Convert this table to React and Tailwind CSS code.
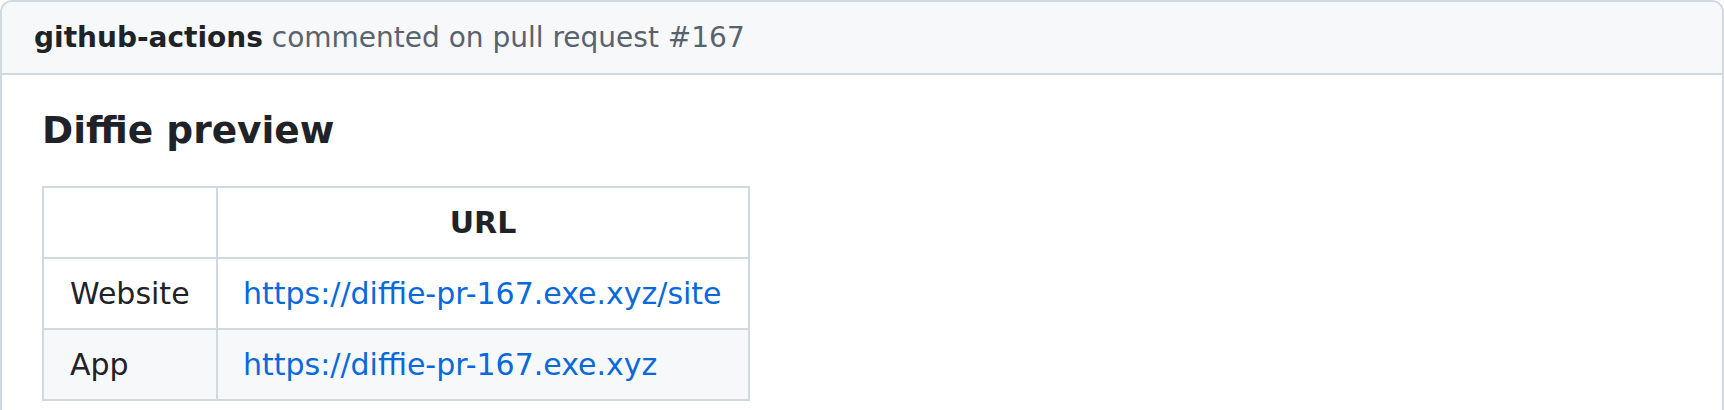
const rows = [
  { label: 'Website', url: 'https://diffie-pr-167.exe.xyz/site' },
  { label: 'App',     url: 'https://diffie-pr-167.exe.xyz' },
]

export default function App() {
  return (
    <div className="w-[1724px] h-[410px] overflow-hidden bg-white" style={{ fontFamily: '"DejaVu Sans", Verdana, sans-serif' }}>
      <div className="border-2 border-[#d1d9e0] rounded-[12px] overflow-hidden min-h-[440px]">

        {/* Header */}
        <div className="bg-[#f6f8fa] border-b-2 border-[#d1d9e0] h-[73px] flex items-center pl-[32px]">
          <p className="text-[28px] leading-[42px] text-[#59636e]">
            <span className="font-bold text-[#1f2328]">github-actions</span> commented on pull request #167
          </p>
        </div>

        {/* Body */}
        <div className="px-[40px] pt-[32px] text-[#1f2328]">
          <h3 className="text-[37.5px] leading-[46px] font-bold">Diffie preview</h3>

          <table className="mt-[33px] border-collapse text-[30px] leading-[41px]">
            <thead>
              <tr className="bg-white">
                <th className="border-2 border-[#d1d9e0] w-[174px] py-[14px] px-[26px]"></th>
                <th className="border-2 border-[#d1d9e0] w-[532px] py-[14px] px-[26px] font-bold text-center">URL</th>
              </tr>
            </thead>
            <tbody>
              {rows.map((r, i) => (
                <tr key={r.label} className={i % 2 ? 'bg-[#f6f8fa]' : 'bg-white'}>
                  <td className="border-2 border-[#d1d9e0] py-[14px] px-[26px] whitespace-nowrap">{r.label}</td>
                  <td className="border-2 border-[#d1d9e0] py-[14px] px-[25px] whitespace-nowrap">
                    <a href="#" className="text-[#0969da]">{r.url}</a>
                  </td>
                </tr>
              ))}
            </tbody>
          </table>
        </div>

      </div>
    </div>
  )
}
